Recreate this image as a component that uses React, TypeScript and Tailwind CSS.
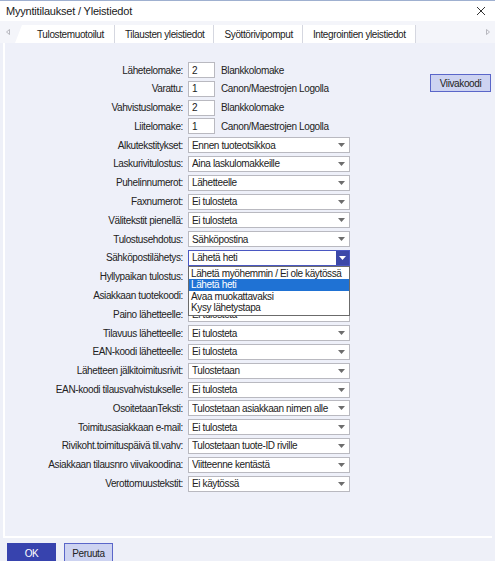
import { useState } from 'react';

const inputRows = [
  { label: 'Lähetelomake:', value: '2', text: 'Blankkolomake' },
  { label: 'Varattu:', value: '1', text: 'Canon/Maestrojen Logolla' },
  { label: 'Vahvistuslomake:', value: '2', text: 'Blankkolomake' },
  { label: 'Liitelomake:', value: '1', text: 'Canon/Maestrojen Logolla' },
];

const selectRows = [
  { label: 'Alkutekstitykset:', value: 'Ennen tuoteotsikkoa' },
  { label: 'Laskurivitulostus:', value: 'Aina laskulomakkeille' },
  { label: 'Puhelinnumerot:', value: 'Lähetteelle' },
  { label: 'Faxnumerot:', value: 'Ei tulosteta' },
  { label: 'Välitekstit pienellä:', value: 'Ei tulosteta' },
  { label: 'Tulostusehdotus:', value: 'Sähköpostina' },
  { label: 'Sähköpostilähetys:', value: 'Lähetä heti', open: true },
  { label: 'Hyllypaikan tulostus:', value: 'Ei tulosteta' },
  { label: 'Asiakkaan tuotekoodi:', value: 'Ei tulosteta' },
  { label: 'Paino lähetteelle:', value: 'Ei tulosteta' },
  { label: 'Tilavuus lähetteelle:', value: 'Ei tulosteta' },
  { label: 'EAN-koodi lähetteelle:', value: 'Ei tulosteta' },
  { label: 'Lähetteen jälkitoimitusrivit:', value: 'Tulostetaan' },
  { label: 'EAN-koodi tilausvahvistukselle:', value: 'Ei tulosteta' },
  { label: 'OsoitetaanTeksti:', value: 'Tulostetaan asiakkaan nimen alle' },
  { label: 'Toimitusasiakkaan e-mail:', value: 'Ei tulosteta' },
  { label: 'Rivikoht.toimituspäivä til.vahv:', value: 'Tulostetaan tuote-ID riville' },
  { label: 'Asiakkaan tilausnro viivakoodina:', value: 'Viitteenne kentästä' },
  { label: 'Verottomuustekstit:', value: 'Ei käytössä' },
];

const sendOptions = [
  'Lähetä myöhemmin / Ei ole käytössä',
  'Lähetä heti',
  'Avaa muokattavaksi',
  'Kysy lähetystapa',
];

const tabs = ['Tulostemuotoilut', 'Tilausten yleistiedot', 'Syöttörivipomput', 'Integrointien yleistiedot'];

function Caret({ color }: { color: string }) {
  return (
    <svg width="7" height="4" viewBox="0 0 7 4">
      <path d="M0 0 H7 L3.5 4 Z" fill={color} />
    </svg>
  );
}

function Label({ children }: { children: string }) {
  return <span className="w-[179px] shrink-0 text-right whitespace-nowrap pr-[1px]">{children}</span>;
}

function Select({ value, open }: { value: string; open?: boolean }) {
  const [picked] = useState(1);
  if (!open) {
    return (
      <div className="ml-[4px] w-[162px] h-[16px] bg-white border border-[#b9b9c0] flex items-center pl-[3px] pr-[4px]">
        <span className="flex-1 whitespace-nowrap overflow-hidden">{value}</span>
        <Caret color="#6d6d6d" />
      </div>
    );
  }
  return (
    <div className="relative ml-[4px] w-[162px] h-[16px]">
      <div className="h-full bg-white border border-[#4a57c2] flex items-center pl-[3px]">
        <span className="flex-1 whitespace-nowrap">{value}</span>
        <div className="w-[13px] h-full bg-[#3b47a8] flex items-center justify-center">
          <Caret color="#ffffff" />
        </div>
      </div>
      <ul className="absolute left-0 top-full w-full bg-white border border-[#6b6b6b] py-[1px]">
        {sendOptions.map((opt, i) => (
          <li
            key={opt}
            className={`h-[11.5px] leading-[11.5px] pl-[2px] whitespace-nowrap ${
              i === picked ? 'bg-[#1f72d4] text-white' : ''
            }`}
          >
            {opt}
          </li>
        ))}
      </ul>
    </div>
  );
}

export default function App() {
  return (
    <div
      className="w-[495px] h-[561px] overflow-hidden flex flex-col bg-[#eef0f8] text-[#222] text-[10px] tracking-[-0.38px]"
      style={{ fontFamily: '"Liberation Sans", Arial, sans-serif' }}
    >
      {/* window title */}
      <div className="h-[21px] shrink-0 bg-white border-t border-[#9fb0d0] flex items-center justify-between pl-[6px] pr-[9px]">
        <span className="text-[11px] tracking-[-0.2px] text-[#1a1a1a]">Myyntitilaukset / Yleistiedot</span>
        <svg width="10" height="10" viewBox="0 0 10 10">
          <path d="M1 1 L9 9 M9 1 L1 9" stroke="#333" strokeWidth="1" />
        </svg>
      </div>

      {/* tab strip */}
      <div className="h-[22px] shrink-0 bg-[#f4f5fa] flex items-end relative">
        <div className="w-[15px] h-full flex items-center justify-center">
          <svg width="4" height="6" viewBox="0 0 4 6">
            <path d="M3.5 0.5 L0.5 3 L3.5 5.5 Z" fill="none" stroke="#a8a8b0" strokeWidth="0.8" />
          </svg>
        </div>
        {tabs.map((t, i) => (
          <div
            key={t}
            className={`h-[18px] flex items-center border-r border-[#d5d7e0] bg-white ${
              i === 0 ? 'w-[100px] pl-[22px] [clip-path:polygon(0_100%,7px_0,100%_0,100%_100%)]' : 'pl-[10px] pr-[9px]'
            }`}
          >
            <span className="whitespace-nowrap">{t}</span>
          </div>
        ))}
        <div className="ml-auto w-[14px] h-full flex items-center justify-center">
          <svg width="4" height="6" viewBox="0 0 4 6">
            <path d="M0.5 0.5 L3.5 3 L0.5 5.5 Z" fill="none" stroke="#a8a8b0" strokeWidth="0.8" />
          </svg>
        </div>
      </div>

      {/* tab page */}
      <div className="flex-1 mx-[3px] border-l-2 border-b-2 border-white bg-[#eef0f9] flex">
        <div className="pt-[19px] flex flex-col gap-[2.8px]">
          {inputRows.map((r) => (
            <div key={r.label} className="h-[16px] flex items-center">
              <Label>{r.label}</Label>
              <div className="ml-[4px] w-[27px] h-[16px] bg-white border border-[#b9b9c0] pl-[3px] flex items-center">
                {r.value}
              </div>
              <span className="ml-[6px] whitespace-nowrap">{r.text}</span>
            </div>
          ))}
          {selectRows.map((r) => (
            <div key={r.label} className={`h-[16px] flex items-center ${r.open ? 'relative z-10' : ''}`}>
              <Label>{r.label}</Label>
              <Select value={r.value} open={r.open} />
            </div>
          ))}
        </div>
        <div className="ml-auto mr-[1px] mt-[31px]">
          <button className="w-[61px] h-[18px] bg-[#cdd3f1] border border-[#5a66c9] text-[#222]">Viivakoodi</button>
        </div>
      </div>

      {/* dialog buttons */}
      <div className="h-[23px] shrink-0 flex items-start gap-[8px] pl-[7px] pt-[5px]">
        <button className="w-[49px] h-[20px] bg-[#3743ae] text-white">OK</button>
        <button className="w-[49px] h-[20px] bg-[#cdd3f1] border border-[#5a66c9] text-[#222]">Peruuta</button>
      </div>
    </div>
  );
}
